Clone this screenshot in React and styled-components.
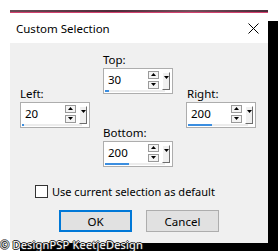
import React from "react";
import styled, { createGlobalStyle } from "styled-components";

const GlobalStyle = createGlobalStyle`
  html, body { margin: 0; padding: 0; background: #fff; }
  body { font-family: "Noto Sans", "Liberation Sans", sans-serif; }
`;

const Stage = styled.div`
  position: relative;
  width: 280px;
  height: 251px;
  overflow: hidden;
  padding: 10px 0 0 10px;
  box-sizing: border-box;
`;

const Dialog = styled.div`
  width: 258px;
  display: flex;
  flex-direction: column;
  box-shadow: 10px 11px 0 #000;
`;

const BackStrip = styled.div`
  height: 2px;
  background: linear-gradient(90deg, #6a4a55, #4e2c3a 40%, #74505c 70%, #4a2a38);
  border-bottom: 1px solid #d2406e;
`;

const TitleBar = styled.div`
  height: 30px;
  background: #fff;
  display: flex;
  align-items: center;
  justify-content: space-between;
  padding: 0 9px 0 6px;
  font-size: 11.5px;
  color: #000;
`;

const Body = styled.div`
  background: #f0f0f0;
  padding: 9px 11px 11px 10px;
  display: flex;
  flex-direction: column;
`;

const Fields = styled.div`
  display: flex;
  gap: 13px;
`;

const Column = styled.div`
  display: flex;
  flex-direction: column;
  gap: ${(p) => p.$gap || 0}px;
  padding-top: ${(p) => p.$offset || 0}px;
`;

const Field = styled.div`
  display: flex;
  flex-direction: column;
`;

const Label = styled.div`
  font-size: 11.5px;
  line-height: 16px;
  padding-left: ${(p) => p.$indent || 0}px;
`;

const Box = styled.div`
  width: 70px;
  height: 26px;
  box-sizing: border-box;
  border: 1px solid #adadad;
  background: #fff;
  display: flex;
  flex-direction: column;
`;

const BoxRow = styled.div`
  flex: 1;
  display: flex;
  align-items: center;
  padding-left: 4px;
  font-size: 11.5px;
`;

const Value = styled.span`
  flex: 1;
`;

const SpinStack = styled.div`
  display: flex;
  flex-direction: column;
  gap: 2px;
  margin-right: 3px;
`;

const SpinBtn = styled.div`
  width: 9px;
  height: 6px;
  border: 1px solid #9a9a9a;
  background: #f4f4f4;
  display: flex;
  align-items: center;
  justify-content: center;
`;

const DropBtn = styled.div`
  width: 8px;
  height: 18px;
  margin-right: 2px;
  margin-top: 2px;
  background: #f0f0f0;
  border-top: 1px solid #fff;
  border-left: 1px solid #fff;
  border-right: 1px solid #6d6d6d;
  border-bottom: 1px solid #6d6d6d;
  display: flex;
  justify-content: center;
  padding-top: 3px;
  box-sizing: border-box;
`;

const Track = styled.div`
  height: 2px;
  margin: 0 0 1px 1px;
  background: #ececec;
  width: 60px;
`;

const Fill = styled.div`
  height: 2px;
  background: #3b8ee0;
`;

const CheckRow = styled.label`
  display: flex;
  align-items: center;
  gap: 4px;
  margin: 17px 0 0 15px;
  font-size: 11px;
`;

const CheckBox = styled.span`
  width: 11px;
  height: 11px;
  border: 1px solid #333;
  background: #fff;
`;

const Buttons = styled.div`
  display: flex;
  gap: 14px;
  margin: 11px 0 0 39px;
`;

const Button = styled.div`
  width: 73px;
  height: 22px;
  box-sizing: border-box;
  display: flex;
  align-items: center;
  justify-content: center;
  background: #e1e1e1;
  border: ${(p) => (p.$primary ? "2px solid #0078d7" : "1px solid #adadad")};
  font-size: 11.5px;
`;

const Watermark = styled.div`
  position: absolute;
  left: 0;
  top: 238px;
  font-size: 11px;
  line-height: 14px;
  color: #fff;
  letter-spacing: 0.2px;
  text-shadow: -1px 0 #222, 1px 0 #222, 0 -1px #222, 0 1px #222;
`;

const Tri = ({ down }) => (
  <svg width="5" height="3" viewBox="0 0 5 3">
    <path d={down ? "M0 0H5L2.5 3Z" : "M0 3H5L2.5 0Z"} fill="#000" />
  </svg>
);

const Spinner = ({ label, value, indent }) => (
  <Field>
    <Label $indent={indent}>{label}</Label>
    <Box>
      <BoxRow>
        <Value>{value}</Value>
        <SpinStack>
          <SpinBtn><Tri /></SpinBtn>
          <SpinBtn><Tri down /></SpinBtn>
        </SpinStack>
        <DropBtn><Tri down /></DropBtn>
      </BoxRow>
      <Track>
        <Fill style={{ width: Math.max(1, Math.round(value * 0.12)) }} />
      </Track>
    </Box>
  </Field>
);

const App = () => (
  <>
    <GlobalStyle />
    <Stage>
      <Dialog>
        <BackStrip />
        <TitleBar>
          <span>Custom Selection</span>
          <svg width="11" height="11" viewBox="0 0 11 11">
            <path d="M0.5 0.5L10.5 10.5M10.5 0.5L0.5 10.5" stroke="#000" strokeWidth="1" />
          </svg>
        </TitleBar>
        <Body>
          <Fields>
            <Column $offset={34}>
              <Spinner label="Left:" value={20} />
            </Column>
            <Column $gap={31}>
              <Spinner label="Top:" value={30} />
              <Spinner label="Bottom:" value={200} />
            </Column>
            <Column $offset={34}>
              <Spinner label="Right:" value={200} indent={1} />
            </Column>
          </Fields>
          <CheckRow>
            <CheckBox />
            Use current selection as default
          </CheckRow>
          <Buttons>
            <Button $primary>OK</Button>
            <Button>Cancel</Button>
          </Buttons>
        </Body>
      </Dialog>
      <Watermark>© DesignPSP KeetjeDesign</Watermark>
    </Stage>
  </>
);

export default App;
